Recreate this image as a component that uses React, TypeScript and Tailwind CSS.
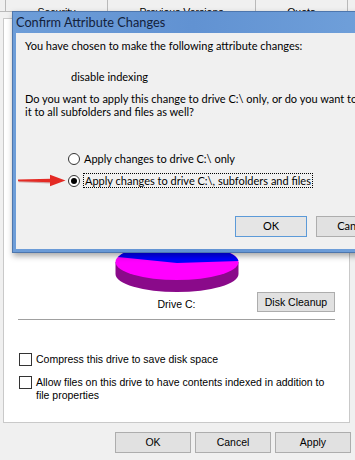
const seg = "font-['Lato','Open_Sans',sans-serif]";

const Checkbox = () => (
  <span className="h-[13px] w-[13px] shrink-0 border border-[#333333] bg-white" />
);

const PieChart = () => (
  <svg width="130" height="56" viewBox="0 0 130 56" className="shrink-0 self-center">
    <path d="M3.5 26 L3.5 38 A61.5 18 0 0 0 126.5 38 L126.5 26 Z" fill="#8a0a8a" />
    <ellipse cx="65" cy="26" rx="61.5" ry="18" fill="#ff00ff" />
    <path d="M65 27 L126.4 25 A61.5 18 0 0 0 5.9 21 Z" fill="#0000ff" />
  </svg>
);

const RedArrow = () => (
  <svg width="48" height="15" viewBox="0 0 48 15" className="shrink-0">
    <polygon points="0,6.6 33,6 33,9.6 0,8.4" fill="#9b1a1a" opacity="0.35" transform="translate(0.6,0.8)" />
    <polygon points="0,6.4 33,5.8 33,9.2 0,8.2" fill="#e42a24" />
    <polygon points="32,1.8 47.5,7.5 32,13.2" fill="#e42a24" />
  </svg>
);

export default function App() {
  return (
    <div className="relative h-[460px] w-[355px] overflow-hidden bg-[#f0f0f0] font-['Liberation_Sans',Arial,sans-serif] text-[10.5px] text-black">
      {/* tab strip, mostly hidden behind the dialog */}
      <div className="flex h-[12px] overflow-hidden border-b border-[#b9b9b9] pl-[5px]">
        <div className="w-[102px] border-l border-[#b9b9b9] pt-[7px] text-center leading-none">Security</div>
        <div className="w-[148px] border-l border-[#b9b9b9] pt-[7px] text-center leading-none">Previous Versions</div>
        <div className="w-[93px] border-x border-[#b9b9b9] pt-[7px] text-center leading-none">Quota</div>
      </div>
      <div className="h-[6px]" />

      {/* General tab panel */}
      <div className="ml-[3px] flex h-[405px] w-[347px] flex-col border border-[#c9c9c9] bg-white px-[14px]">
        <div className="h-[217px] shrink-0" />
        <PieChart />
        <div className="grid h-[20px] grid-cols-[1fr_auto_1fr] items-end">
          <div />
          <div className="pb-[1px] leading-[13px]">Drive C:</div>
          <button className="h-[20px] w-[78px] justify-self-end border border-[#adadad] bg-[#e1e1e1] leading-none">
            Disk Cleanup
          </button>
        </div>
        <div className="mt-[7px] h-px bg-[#a0a0a0]" />

        <div className="mt-[33px] flex h-[13px] items-center gap-[4px] pl-px">
          <Checkbox />
          <span className="leading-[13px]">Compress this drive to save disk space</span>
        </div>
        <div className="mt-[10px] flex items-start gap-[4px] pl-px">
          <Checkbox />
          <span className="whitespace-nowrap leading-[13px]">
            Allow files on this drive to have contents indexed in addition to
            <br />
            file properties
          </span>
        </div>
      </div>

      <div className="mt-[9px] flex justify-end gap-[4px] pr-[4px]">
        <button className="h-[21px] w-[76px] border border-[#adadad] bg-[#e1e1e1]">OK</button>
        <button className="h-[21px] w-[76px] border border-[#adadad] bg-[#e1e1e1]">Cancel</button>
        <button className="h-[21px] w-[76px] border border-[#adadad] bg-[#e1e1e1]">Apply</button>
      </div>

      {/* Confirm Attribute Changes dialog */}
      <div className="absolute left-[12px] top-[11px] flex h-[242px] w-[362px] flex-col border border-[#4d76ad] bg-gradient-to-r from-[#6d9dd8] via-[#6192d2] to-[#70a0da] shadow-[1px_3px_6px_rgba(0,0,0,0.35)]">
        <div className={`flex h-[21px] shrink-0 items-center pl-[3px] text-[12.75px] text-[#13213b] ${seg}`}>
          Confirm Attribute Changes
        </div>
        <div className={`mx-[3px] mb-[3px] flex flex-1 flex-col bg-[#f0f0f0] text-[11px] ${seg}`}>
          <p className="ml-[9px] mt-[6px] leading-[14px]">
            You have chosen to make the following attribute changes:
          </p>
          <p className="ml-[55px] mt-[17px] leading-[14px]">disable indexing</p>
          <p className="ml-[9px] mt-[8px] whitespace-nowrap leading-[13px]">
            Do you want to apply this change to drive C:\ only, or do you want to apply
            <br />
            it to all subfolders and files as well?
          </p>

          <div className="ml-[52px] mt-[33px] flex h-[15px] items-center">
            <span className="h-[12px] w-[12px] shrink-0 rounded-full border border-[#333333] bg-white" />
            <span className="ml-[4px] leading-[13px]">Apply changes to drive C:\ only</span>
          </div>
          <div className="ml-[2px] mt-[7px] flex h-[15px] items-center">
            <RedArrow />
            <span className="ml-[2px] flex h-[12px] w-[12px] shrink-0 items-center justify-center rounded-full border border-[#333333] bg-white">
              <span className="h-[6px] w-[6px] rounded-full bg-black" />
            </span>
            <span className="ml-[3px] flex h-[15px] items-center border border-dotted border-black px-px leading-[13px]">
              Apply changes to drive C:\, subfolders and files
            </span>
          </div>

          <div className="ml-[219px] mt-[28px] flex gap-[9px]">
            <button className="h-[21px] w-[72px] shrink-0 border border-[#5c9ad8] bg-[#e5e5e5]">OK</button>
            <button className="h-[21px] w-[75px] shrink-0 border border-[#adadad] bg-[#e1e1e1]">Cancel</button>
          </div>
        </div>
      </div>
    </div>
  );
}
